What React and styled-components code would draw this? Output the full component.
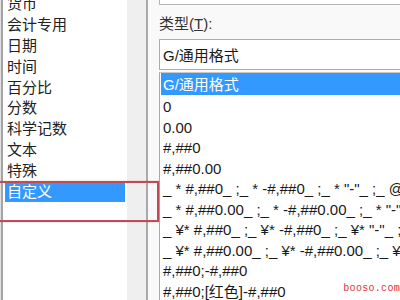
import styled, { createGlobalStyle } from "styled-components"

const Global = createGlobalStyle`
  html, body {
    margin: 0;
    padding: 0;
    background: #f9f9f9;
  }
  body {
    font-family: "Liberation Sans", "Noto Sans CJK SC", sans-serif;
  }
`

const Dialog = styled.div`
  position: relative;
  width: 400px;
  height: 300px;
  overflow: hidden;
  display: flex;
  background: #f9f9f9;
`

const LeftPanel = styled.div`
  width: 148px;
  height: 100%;
  display: flex;
  border-left: 1px solid #e0e0e0;
  border-right: 2px solid #a9a9a9;
  box-sizing: border-box;
`

const CategoryList = styled.div`
  width: 126px;
  background: #fff;
  border-left: 2px solid #a4a4a4;
  padding: 0 2px 0 2px;
  box-sizing: border-box;
  margin-top: -7px;
`

const Track = styled.div`
  flex: 1;
  background: #efefef;
`

const Category = styled.div`
  height: 20.9px;
  line-height: 21.5px;
  font-size: 15px;
  padding-left: 2px;
  color: ${p => (p.$active ? "#fff" : "#222")};
  background: ${p => (p.$active ? "#3399ff" : "transparent")};
  white-space: nowrap;
`

const RightPanel = styled.div`
  flex: 1;
  padding-left: 11px;
  display: flex;
  flex-direction: column;
  min-width: 0;
`

const SampleBox = styled.div`
  height: 9px;
  background: #fff;
  border-left: 1px solid #b5b5b5;
  border-bottom: 1px solid #b5b5b5;
`

const Label = styled.div`
  font-size: 15px;
  color: #333;
  height: 34px;
  line-height: 38px;
  white-space: nowrap;
`

const Key = styled.span`
  text-decoration: underline;
`

const Input = styled.div`
  height: 29px;
  line-height: 31px;
  background: #fff;
  border: 1px solid #adadad;
  border-right: none;
  padding-left: 3px;
  font-size: 15px;
  color: #1a1a1a;
  white-space: nowrap;
`

const FormatList = styled.div`
  margin-top: 2px;
  flex: 1;
  background: #fff;
  border-left: 1px solid #a8a8a8;
  border-top: 1px solid #c8c8c8;
  padding-left: 1px;
`

const Format = styled.div`
  height: ${p => (p.$active ? "22px" : "20.5px")};
  line-height: ${p => (p.$active ? "23px" : "23px")};
  font-size: 15px;
  padding-left: 2px;
  white-space: nowrap;
  overflow: hidden;
  color: ${p => (p.$active ? "#fff" : "#1a1a1a")};
  background: ${p => (p.$active ? "#3399ff" : "transparent")};
`

const Marker = styled.div`
  position: absolute;
  left: -3px;
  top: 181px;
  width: 158px;
  height: 37px;
  border: 2px solid #c24a55;
  box-shadow: 0 0 1px rgba(194, 74, 85, 0.6);
`

const Watermark = styled.div`
  position: absolute;
  right: 0;
  bottom: 6px;
  font-family: "Liberation Mono", monospace;
  font-size: 10px;
  letter-spacing: 0.3px;
  color: #e0343c;
`

const categories = ["货币", "会计专用", "日期", "时间", "百分比", "分数", "科学记数", "文本", "特殊", "自定义"]

const formats = [
  "G/通用格式",
  "0",
  "0.00",
  "#,##0",
  "#,##0.00",
  '_ * #,##0_ ;_ * -#,##0_ ;_ * "-"_ ;_ @_ ',
  '_ * #,##0.00_ ;_ * -#,##0.00_ ;_ * "-"??_ ;_ @_ ',
  '_ ¥* #,##0_ ;_ ¥* -#,##0_ ;_ ¥* "-"_ ;_ @_ ',
  '_ ¥* #,##0.00_ ;_ ¥* -#,##0.00_ ;_ ¥* "-"??_ ;_ @_ ',
  "#,##0;-#,##0",
  "#,##0;[红色]-#,##0",
]

export default function App() {
  return (
    <Dialog>
      <Global />
      <LeftPanel>
        <CategoryList>
          {categories.map(c => (
            <Category key={c} $active={c === "自定义"}>{c}</Category>
          ))}
        </CategoryList>
        <Track />
      </LeftPanel>
      <RightPanel>
        <SampleBox />
        <Label>类型(<Key>T</Key>):</Label>
        <Input>G/通用格式</Input>
        <FormatList>
          {formats.map((f, i) => (
            <Format key={f} $active={i === 0}>{f}</Format>
          ))}
        </FormatList>
      </RightPanel>
      <Marker />
      <Watermark>booso.com</Watermark>
    </Dialog>
  )
}
